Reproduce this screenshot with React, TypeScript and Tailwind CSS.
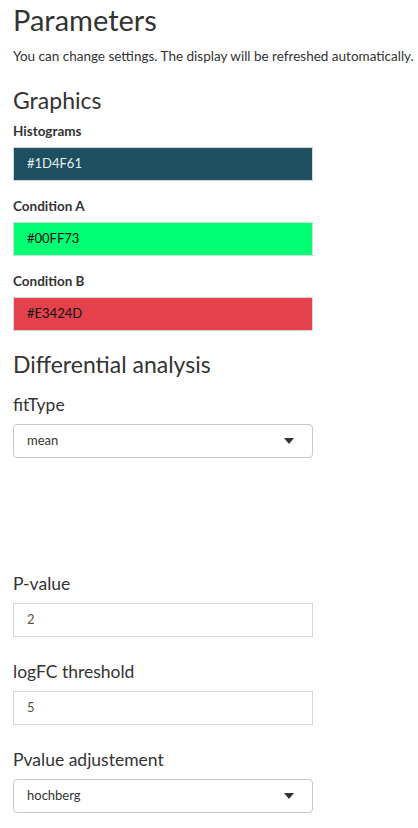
import React from "react"

const font = { fontFamily: "Lato, 'Noto Sans', sans-serif" }

function ColorField({ label, value, bg, fg, first }: { label: string; value: string; bg: string; fg: string; first?: boolean }) {
  return (
    <div>
      <div className={`${first ? "mt-[6px]" : "mt-[16px]"} h-[18px] leading-[18px] text-[13.5px] font-bold text-[#333]`}>{label}</div>
      <div className={`mt-[7px] h-[34px] w-[300px] border border-[#d3d7de] px-[13px] flex items-center text-[13px] ${bg} ${fg}`}>
        {value}
      </div>
    </div>
  )
}

function Caret() {
  return (
    <svg width="10" height="6" viewBox="0 0 10 6" className="text-[#333]">
      <path d="M0 0h10L5 6z" fill="currentColor" />
    </svg>
  )
}

function SelectField({ label, value, gap }: { label: string; value: string; gap: string }) {
  return (
    <div>
      <div className={`${gap} h-[24px] leading-[24px] text-[17.5px] text-[#333]`}>{label}</div>
      <div className="mt-[7px] h-[34px] w-[300px] rounded-[4px] border border-[#c8c8c8] pl-[13px] pr-[18px] flex items-center justify-between text-[13px] text-[#333]">
        <span>{value}</span>
        <Caret />
      </div>
    </div>
  )
}

function NumberField({ label, value, gap }: { label: string; value: string; gap: string }) {
  return (
    <div>
      <div className={`${gap} h-[24px] leading-[24px] text-[17.5px] text-[#333]`}>{label}</div>
      <div className="mt-[7px] h-[34px] w-[300px] border border-[#d3d7de] px-[13px] flex items-center text-[13px] text-[#555]">
        {value}
      </div>
    </div>
  )
}

export default function App() {
  return (
    <div className="w-[418px] h-[828px] bg-white px-[13px] overflow-hidden" style={font}>
      <h1 className="h-[40px] leading-[40px] text-[29px] text-[#333]">Parameters</h1>
      <p className="mt-[6px] h-[20px] leading-[20px] text-[13.5px] text-[#333] whitespace-nowrap">
        You can change settings. The display will be refreshed automatically.
      </p>
      <h2 className="mt-[18px] h-[32px] leading-[32px] text-[23px] text-[#333]">Graphics</h2>
      <ColorField first label="Histograms" value="#1D4F61" bg="bg-[#1d4f61]" fg="text-[#e8eef0]" />
      <ColorField label="Condition A" value="#00FF73" bg="bg-[#00ff73]" fg="text-[#111]" />
      <ColorField label="Condition B" value="#E3424D" bg="bg-[#e3424d]" fg="text-[#111]" />
      <h2 className="mt-[17px] h-[32px] leading-[32px] text-[23px] text-[#333]">Differential analysis</h2>
      <SelectField label="fitType" value="mean" gap="mt-[13px]" />
      <NumberField label="P-value" value="2" gap="mt-[114px]" />
      <NumberField label="logFC threshold" value="5" gap="mt-[23px]" />
      <SelectField label="Pvalue adjustement" value="hochberg" gap="mt-[23px]" />
    </div>
  )
}
